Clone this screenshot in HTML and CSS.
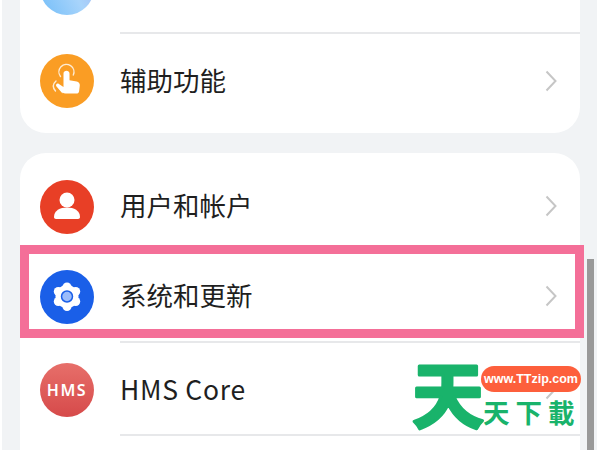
FILE: index.html
```html
<!DOCTYPE html>
<html lang="zh-CN">
<head>
    <meta charset="UTF-8">
    <meta name="viewport" content="width=device-width, initial-scale=1.0">
    <title>设置</title>
    <link rel="stylesheet" href="styles.css">
</head>
<body>
    <div class="screen">
        <div class="list">
            <div class="card">
                <div class="row">
                    <span class="icon icon-top"></span>
                    <div class="row-body"></div>
                </div>
                <div class="row">
                    <span class="icon icon-orange">
                        <svg viewBox="0 0 54 54" width="54" height="54">
                            <path d="M22.500 39.500 16.500 32.500c-1.400-1.600 .6-3.800 2.400-2.500l4.600 3V19.500c0-3.800 6-3.800 6 0v6.700l7.200 1.400c2 .4 3.300 2 3.100 4l-.7 5.600c-.2 1.500-1.200 2.300-2.700 2.300H25.500c-1.200 0-2.100-.3-3-1z" fill="#fff"/>
                            <path d="M20.500 22.500a7.500 7.500 0 1 1 12.800-1.500" fill="none" stroke="#fff" stroke-opacity=".8" stroke-width="1.400" stroke-linecap="round"/>
                            <path d="M15.500 37c-3-3.500-2.800-7 .5-10" fill="none" stroke="#fff" stroke-opacity=".8" stroke-width="1.400" stroke-linecap="round"/>
                        </svg>
                    </span>
                    <div class="row-body no-line">
                        <span class="label">辅助功能</span>
                        <svg class="chevron" viewBox="0 0 12 22" width="12" height="22"><path d="M1.500 1.500 10.500 11 1.500 20.500"/></svg>
                    </div>
                </div>
            </div>

            <div class="card">
                <div class="row">
                    <span class="icon icon-red">
                        <svg viewBox="0 0 54 54" width="54" height="54">
                            <circle cx="27" cy="20" r="7.500" fill="#fff"/>
                            <path d="M14 37c0-6.500 6-9.500 13-9.500S40 30.500 40 37c0 1.200-.8 2-2 2H16c-1.200 0-2-.8-2-2z" fill="#fff"/>
                        </svg>
                    </span>
                    <div class="row-body">
                        <span class="label">用户和帐户</span>
                        <svg class="chevron" viewBox="0 0 12 22" width="12" height="22"><path d="M1.500 1.500 10.500 11 1.500 20.500"/></svg>
                    </div>
                </div>
                <div class="row row-short">
                    <span class="icon icon-blue">
                        <svg viewBox="0 0 54 54" width="54" height="54">
                            <g fill="#fff">
                                <circle cx="27" cy="26.500" r="11.500"/>
                                <circle cx="27" cy="17" r="4.500"/>
                                <circle cx="35.700" cy="21.500" r="4.500"/>
                                <circle cx="35.700" cy="31.500" r="4.500"/>
                                <circle cx="27" cy="36.500" r="4.500"/>
                                <circle cx="18.300" cy="31.500" r="4.500"/>
                                <circle cx="18.300" cy="21.500" r="4.500"/>
                            </g>
                            <circle cx="27" cy="26.500" r="5.500" fill="#9bbcfb" stroke="#1a5fe8" stroke-width="1.500"/>
                        </svg>
                    </span>
                    <div class="row-body">
                        <span class="label">系统和更新</span>
                        <svg class="chevron" viewBox="0 0 12 22" width="12" height="22"><path d="M1.500 1.500 10.500 11 1.500 20.500"/></svg>
                    </div>
                </div>
                <div class="row">
                    <span class="icon icon-hms">HMS</span>
                    <div class="row-body">
                        <span class="label label-latin">HMS Core</span>
                        <svg class="chevron" viewBox="0 0 12 22" width="12" height="22"><path d="M1.500 1.500 10.500 11 1.500 20.500"/></svg>
                    </div>
                </div>
                <div class="row"></div>
            </div>
        </div>
    </div>

    <!-- overlays -->
    <div class="highlight"></div>
    <div class="scrollbar"></div>
    <div class="watermark">
        <svg class="wm-big" viewBox="0 0 68 90" width="68" height="90"><text x="-1" y="72.500">天</text></svg>
        <div class="wm-side">
            <span class="wm-url">www.TTzip.com</span>
            <span class="wm-name">天下載</span>
        </div>
    </div>
</body>
</html>
```

FILE: styles.css
```css
body {
    margin: 0;
    width: 600px;
    height: 450px;
    overflow: hidden;
    position: relative;
    background: #fff;
    font-family: "Noto Sans CJK SC", "Noto Sans", sans-serif;
}
.screen {
    height: 450px;
    margin: 0 3px 0 2px;
    padding: 0 17px 0 18px;
    background: #f1f3f5;
    overflow: hidden;
}
.list {
    margin-top: -66px;
}
.card {
    background: #fff;
    border-radius: 26px;
    padding: 7px 0 6px;
    margin-bottom: 20px;
}
.row {
    display: flex;
    height: 93px;
    padding-left: 20px;
}
.row-short {
    height: 90px;
}
.row-short .icon {
    margin-bottom: 3px;
}
.row-short .row-body {
    padding-bottom: 3px;
}
.row-body {
    flex: 1;
    display: flex;
    align-items: center;
    justify-content: space-between;
    margin-left: 26px;
    padding-right: 23px;
    border-bottom: 2px solid #e7e8ea;
    box-sizing: border-box;
}
.no-line {
    border-bottom: none;
}
.label {
    font-size: 26.5px;
    line-height: 32px;
    margin-top: -2px;
    color: #1f1f1f;
}
.label-latin {
    margin-top: 0;
    letter-spacing: 0.7px;
}
.chevron {
    fill: none;
    stroke: #c6c6c6;
    stroke-width: 2;
}
.icon {
    width: 54px;
    height: 54px;
    flex: none;
    align-self: center;
    border-radius: 50%;
    display: flex;
    align-items: center;
    justify-content: center;
}
.icon-top {
    background: linear-gradient(60deg, #72bdf8, #a8d4fb 55%, #a3b2ee);
}
.icon-orange {
    background: #fa9d24;
}
.icon-red {
    background: #e83f26;
}
.icon-blue {
    background: #1a5fe8;
}
.icon-hms {
    background: linear-gradient(#e76f6a, #d64a4a);
    color: #fff;
    font-family: "Noto Sans", sans-serif;
    font-size: 16px;
    font-weight: 600;
    letter-spacing: 1.5px;
}
.highlight {
    position: absolute;
    left: 20px;
    top: 245px;
    width: 546px;
    height: 75px;
    border: 9px solid #f46f98;
}
.scrollbar {
    position: absolute;
    left: 587px;
    top: 259px;
    width: 7px;
    height: 191px;
    background: #999;
}
.watermark {
    position: absolute;
    left: 413px;
    top: 349px;
    display: flex;
}
.wm-big {
    flex: none;
    overflow: visible;
    font-size: 72px;
    font-weight: 700;
    fill: #19b36b;
    stroke: #19b36b;
    stroke-width: 3;
    stroke-linejoin: round;
}
.wm-side {
    display: flex;
    flex-direction: column;
    align-items: flex-start;
    padding-top: 17px;
}
.wm-url {
    width: 100px;
    height: 26px;
    border-radius: 13px;
    background: #fd5f3c;
    color: #fff;
    font-family: "Liberation Sans", sans-serif;
    font-size: 12.5px;
    font-weight: 700;
    line-height: 26px;
    text-align: center;
}
.wm-name {
    margin: 2px 0 0 2px;
    font-size: 26.5px;
    line-height: 36px;
    font-weight: 700;
    letter-spacing: 6px;
    color: #19b36b;
}
```
